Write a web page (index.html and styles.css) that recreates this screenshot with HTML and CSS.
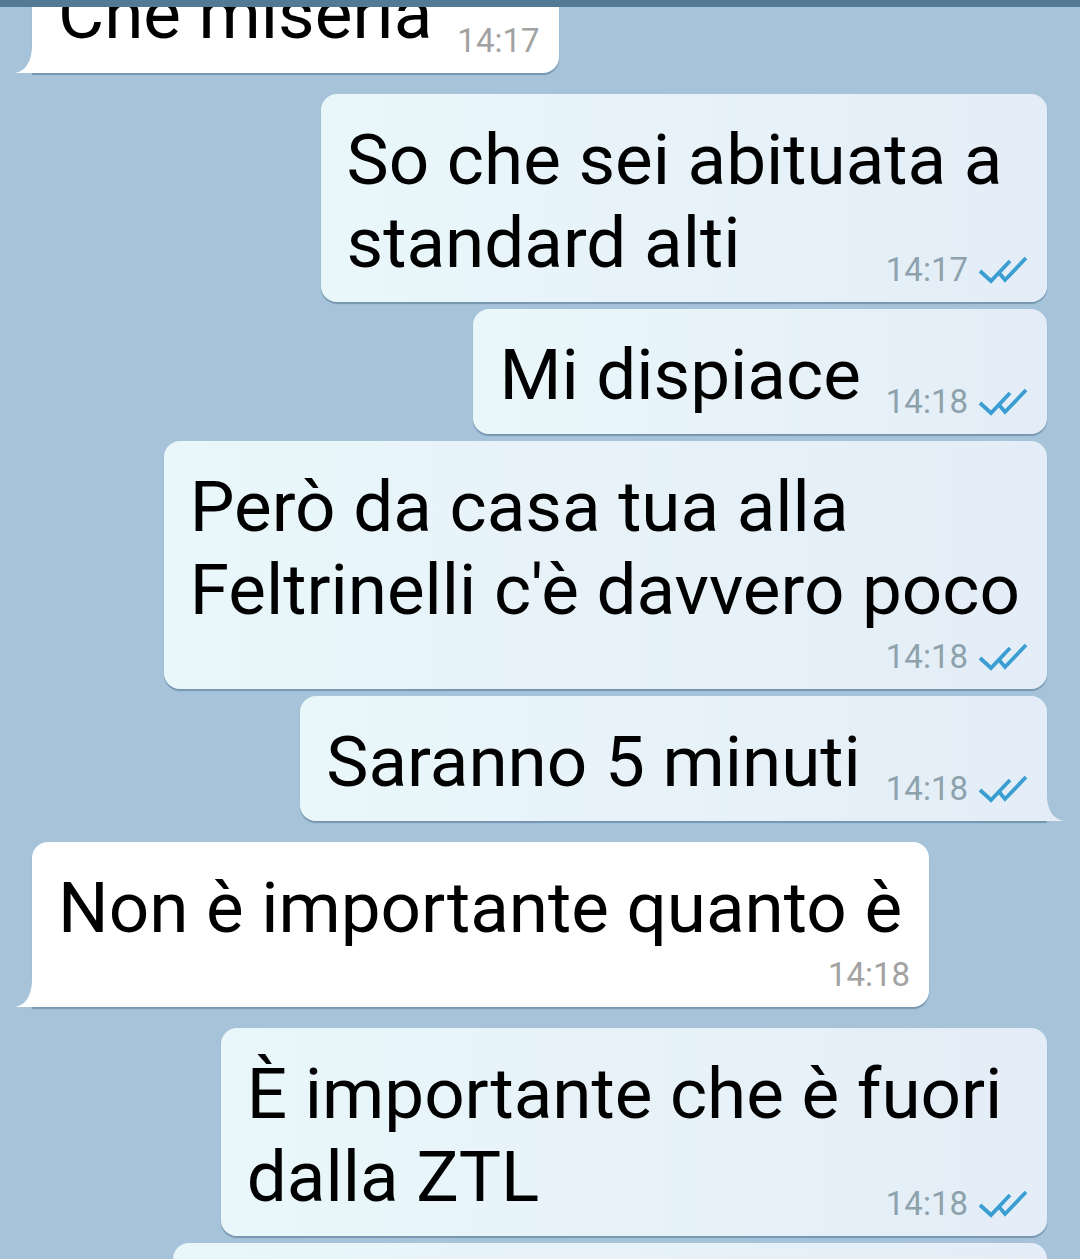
FILE: index.html
```html
<!DOCTYPE html>
<html lang="it">
<head>
    <meta charset="UTF-8">
    <meta name="viewport" content="width=device-width, initial-scale=1.0">
    <title>Chat</title>
    <link rel="stylesheet" href="styles.css">
</head>
<body>
    <div class="appbar"></div>

    <div class="chat">
        <!-- lei -->
        <div class="msg in">
            <div class="bubble tail">
                <p class="text">Che miseria<span class="meta"><span class="time">14:17</span></span></p>
                <svg class="tail-shape" viewBox="0 0 17 26" width="17" height="26"><path d="M17 0 Q16 23 0 26 L17 26 Z" fill="#ffffff"/></svg>
            </div>
        </div>

        <!-- io -->
        <div class="msg out">
            <div class="bubble">
                <p class="text">So che sei abituata a&nbsp;<br>standard alti<span class="meta"><span class="time">14:17</span><svg class="checks" viewBox="0 0 50 28" width="50" height="28"><path d="M2 15L13 25L32 5M22 18L27 24L48 2"/></svg></span></p>
            </div>
        </div>
        <div class="msg out">
            <div class="bubble">
                <p class="text">Mi dispiace<span class="meta"><span class="time">14:18</span><svg class="checks" viewBox="0 0 50 28" width="50" height="28"><path d="M2 15L13 25L32 5M22 18L27 24L48 2"/></svg></span></p>
            </div>
        </div>
        <div class="msg out">
            <div class="bubble">
                <p class="text">Però da casa tua alla<br>Feltrinelli c'è davvero poco</p>
                <div class="meta below"><span class="time">14:18</span><svg class="checks" viewBox="0 0 50 28" width="50" height="28"><path d="M2 15L13 25L32 5M22 18L27 24L48 2"/></svg></div>
            </div>
        </div>
        <div class="msg out">
            <div class="bubble tail">
                <p class="text">Saranno 5 minuti<span class="meta"><span class="time">14:18</span><svg class="checks" viewBox="0 0 50 28" width="50" height="28"><path d="M2 15L13 25L32 5M22 18L27 24L48 2"/></svg></span></p>
                <svg class="tail-shape" viewBox="0 0 17 24" width="17" height="24"><path d="M0 0 Q1 21 17 24 L0 24 Z" fill="#e4edf7"/></svg>
            </div>
        </div>

        <!-- lei -->
        <div class="msg in">
            <div class="bubble tail">
                <p class="text">Non è importante quanto è</p>
                <div class="meta below"><span class="time">14:18</span></div>
                <svg class="tail-shape" viewBox="0 0 17 26" width="17" height="26"><path d="M17 0 Q16 23 0 26 L17 26 Z" fill="#ffffff"/></svg>
            </div>
        </div>

        <!-- io -->
        <div class="msg out">
            <div class="bubble">
                <p class="text">È importante che è fuori&nbsp;<br>dalla ZTL<span class="meta"><span class="time">14:18</span><svg class="checks" viewBox="0 0 50 28" width="50" height="28"><path d="M2 15L13 25L32 5M22 18L27 24L48 2"/></svg></span></p>
            </div>
        </div>
        <div class="msg out">
            <div class="bubble">
                <p class="text">E poi lì si parcheggia bene<br>senza problemi<span class="meta"><span class="time">14:18</span><svg class="checks" viewBox="0 0 50 28" width="50" height="28"><path d="M2 15L13 25L32 5M22 18L27 24L48 2"/></svg></span></p>
            </div>
        </div>
    </div>
</body>
</html>
```

FILE: styles.css
```css
/* chat telegram */
html, body {
    margin: 0;
    padding: 0;
    height: 100%;
}

body {
    font-family: Roboto, 'Noto Sans', sans-serif;
    background-color: #a6c3da;
    color: #000;
    overflow: hidden;
}

.appbar {
    position: relative;
    z-index: 2;
    height: 7px;
    background-color: #537995;
}

.chat {
    display: flex;
    flex-direction: column;
    margin-top: -66px;
}

.msg {
    display: flex;
    margin-top: 7px;
}

.msg.in {
    justify-content: flex-start;
    padding-left: 32px;
}

.msg.out {
    justify-content: flex-end;
    padding-right: 33px;
}

/* cambio di mittente: spazio più grande */
.msg.in + .msg.out,
.msg.out + .msg.in {
    margin-top: 21px;
}

.bubble {
    position: relative;
    padding: 24px 27px 18px 26px;
    border-radius: 16px;
    box-shadow: 0 2px 1px rgba(60, 95, 125, 0.45);
}

.msg.in .bubble {
    background-color: #ffffff;
}

.msg.out .bubble {
    background: linear-gradient(to right, #e9f7fa, #e4edf7);
}

.msg.in .bubble.tail {
    border-bottom-left-radius: 0;
}

.msg.out .bubble.tail {
    border-bottom-right-radius: 0;
}

.tail-shape {
    position: absolute;
    bottom: 0;
    display: block;
}

.msg.in .tail-shape {
    left: -17px;
}

.msg.out .tail-shape {
    right: -17px;
}

.text {
    margin: 0;
    font-size: 71px;
    line-height: 83px;
    white-space: nowrap;
}

.meta {
    float: right;
    display: flex;
    align-items: center;
    gap: 10px;
    height: 28px;
    margin: 55px -8px 0 25px;
    line-height: 28px;
    font-size: 33px;
}

.meta.below {
    float: none;
    justify-content: flex-end;
    margin: 12px -8px 0 0;
}

.msg.in .time {
    color: #a2a2a2;
}

.msg.out .time {
    color: #8da2ac;
}

.checks {
    display: block;
}

.checks path {
    fill: none;
    stroke: #3a9ed2;
    stroke-width: 3.8;
}
```
